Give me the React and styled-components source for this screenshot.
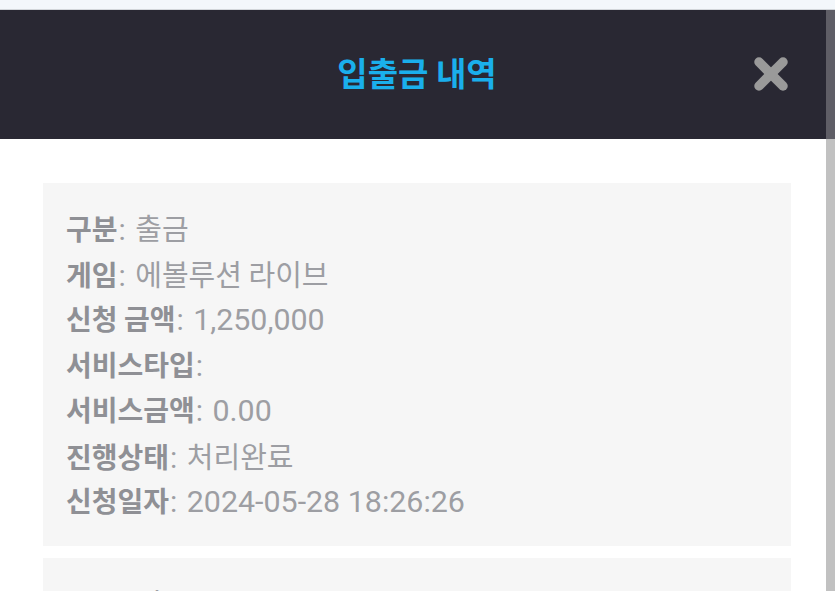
import React from 'react'
import styled, { createGlobalStyle } from 'styled-components'

const GlobalStyle = createGlobalStyle`
  html, body {
    margin: 0;
    padding: 0;
    background: #ffffff;
    overflow: hidden;
  }
  body {
    font-family: Roboto, "Noto Sans CJK KR", sans-serif;
  }
`

const Page = styled.div`
  height: 591px;
  display: flex;
  flex-direction: column;
  overflow: hidden;
`

const TopStrip = styled.div`
  height: 10px;
  flex-shrink: 0;
  background: #f3f7fb;
  border-bottom: 1px solid #d2d6da;
  box-sizing: border-box;
`

const Body = styled.div`
  flex: 1;
  display: flex;
  min-height: 0;
`

const Main = styled.div`
  flex: 1;
  display: flex;
  flex-direction: column;
  min-width: 0;
`

const Header = styled.div`
  height: 129px;
  flex-shrink: 0;
  background: #292833;
  display: flex;
  align-items: center;
  justify-content: center;
  position: relative;
`

const Title = styled.h1`
  margin: 0;
  font-family: "Noto Sans CJK KR", sans-serif;
  font-size: 33px;
  line-height: 40px;
  font-weight: 700;
  color: #1aafec;
  padding-left: 8px;
  margin-top: -6px;
`

const CloseButton = styled.button`
  position: absolute;
  right: 36px;
  top: 45px;
  width: 38px;
  height: 38px;
  padding: 0;
  border: none;
  background: transparent;
  cursor: pointer;
`

const Content = styled.div`
  flex: 1;
  display: flex;
  flex-direction: column;
  gap: 12px;
  padding: 44px 35px 0 43px;
  overflow: hidden;
`

const Card = styled.div`
  background: #f6f6f6;
  padding: 22px 23px;
  flex-shrink: 0;
`

const Line = styled.div`
  height: 45.5px;
  display: flex;
  align-items: baseline;
  padding-top: 8px;
  box-sizing: border-box;
  color: #9d9ea3;
  white-space: pre;
`

const Label = styled.span`
  font-family: "Noto Sans CJK KR", sans-serif;
  font-size: 28px;
  font-weight: 700;
  line-height: 1;
  color: #8f9095;
`

const Colon = styled.span`
  font-family: Roboto, sans-serif;
  font-size: 30px;
  line-height: 1;
  padding-left: 1px;
  padding-right: 2px;
`

const Value = styled.span`
  font-family: ${p => (p.$kr ? '"Noto Sans CJK KR"' : 'Roboto')}, sans-serif;
  font-size: ${p => (p.$kr ? '29px' : '30.4px')};
  line-height: 1;
`

const Scrollbar = styled.div`
  width: 9px;
  flex-shrink: 0;
  display: flex;
  flex-direction: column;
`

const ScrollTrack = styled.div`
  height: 129px;
  background: #5f5e66;
`

const ScrollThumb = styled.div`
  flex: 1;
  background: #c1c1c1;
`

const records = [
  [
    ['구분', '출금'],
    ['게임', '에볼루션 라이브'],
    ['신청 금액', '1,250,000'],
    ['서비스타입', ''],
    ['서비스금액', '0.00'],
    ['진행상태', '처리완료'],
    ['신청일자', '2024-05-28 18:26:26']
  ],
  [
    ['구분', '입금'],
    ['게임', '에볼루션 라이브'],
    ['신청 금액', '1,000,000']
  ]
]

const isKorean = s => /[\uAC00-\uD7A3]/.test(s)

function CloseIcon () {
  return (
    <svg width="38" height="38" viewBox="0 0 38 38">
      <g stroke="#9a9a9a" strokeWidth="9.5" strokeLinecap="round">
        <line x1="7" y1="7" x2="31" y2="31" />
        <line x1="31" y1="7" x2="7" y2="31" />
      </g>
    </svg>
  )
}

export default function App () {
  return (
    <Page>
      <GlobalStyle />
      <TopStrip />
      <Body>
        <Main>
          <Header>
            <Title>입출금 내역</Title>
            <CloseButton aria-label="닫기"><CloseIcon /></CloseButton>
          </Header>
          <Content>
            {records.map((rec, i) => (
              <Card key={i}>
                {rec.map(([label, value]) => (
                  <Line key={label}>
                    <Label>{label}</Label>
                    <Colon>: </Colon>
                    <Value $kr={isKorean(value)}>{value}</Value>
                  </Line>
                ))}
              </Card>
            ))}
          </Content>
        </Main>
        <Scrollbar>
          <ScrollTrack />
          <ScrollThumb />
        </Scrollbar>
      </Body>
    </Page>
  )
}
